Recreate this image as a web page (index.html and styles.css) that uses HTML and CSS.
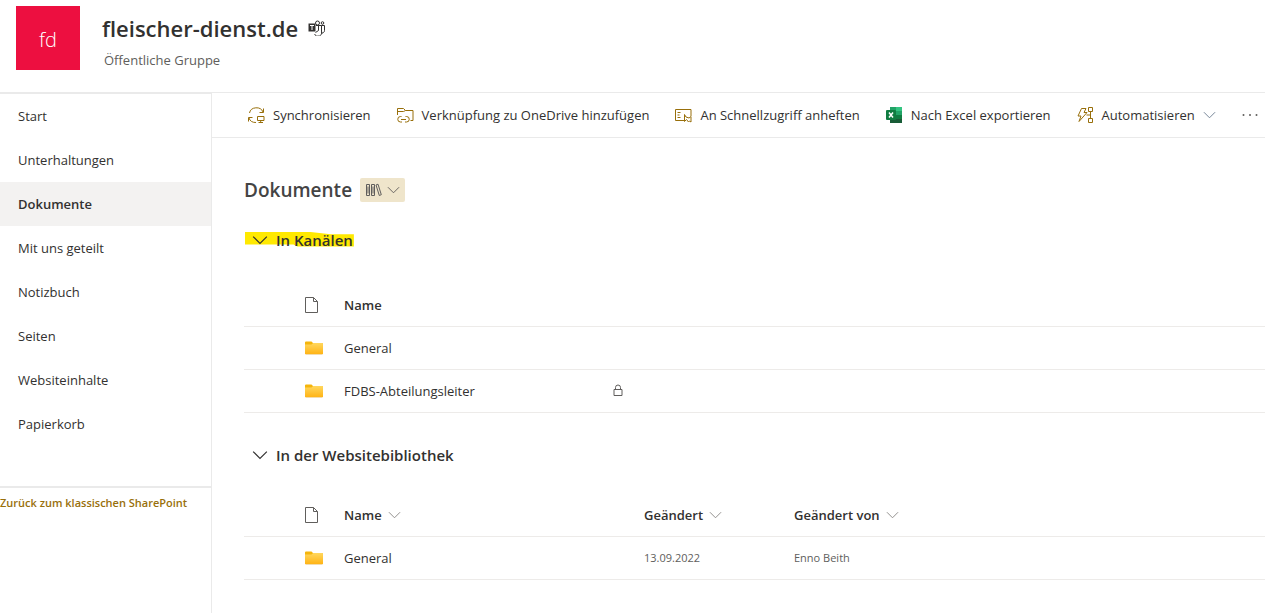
FILE: index.html
```html
<!DOCTYPE html>
<html lang="de">
<head>
<meta charset="utf-8">
<meta name="viewport" content="width=device-width, initial-scale=1">
<title>fleischer-dienst.de - Dokumente</title>
<link rel="stylesheet" href="styles.css">
</head>
<body>
<svg class="defs" aria-hidden="true">
  <defs>
    <linearGradient id="folder-fill" x1="0" y1="0" x2="0" y2="1">
      <stop offset="0" stop-color="#ffd75e"/>
      <stop offset="1" stop-color="#ffb416"/>
    </linearGradient>
    <symbol id="chevron" viewBox="0 0 14 8"><path d="M1 1l6 6 6-6" fill="none" stroke="currentColor"/></symbol>
    <symbol id="file" viewBox="0 0 14 16"><path d="M.5.5h8l4 4v11H.5zM8.500.5v4h4" fill="none" stroke="currentColor"/></symbol>
    <symbol id="folder" viewBox="0 0 18 14">
      <path d="M0 1.500Q0 .5 1 .5h5.500l1.500 1.500h9q1 0 1 1V13H0z" fill="#f5b50c"/>
      <path d="M0 3.500h6.500L8.200 2H17.500q.5 0 .5.500V12.500q0 .5-.5.500H.5q-.5 0-.5-.500z" fill="url(#folder-fill)"/>
      <path d="M.5 13.500h17" stroke="#f3dcae"/>
    </symbol>
  </defs>
</svg>

<header class="site-header">
  <div class="site-logo" aria-hidden="true">fd</div>
  <div>
    <h1 class="site-title">fleischer-dienst.de
      <svg class="teams" viewBox="0 0 18 16" role="img" aria-label="Teams">
        <g fill="none" stroke="#323130">
          <circle cx="9.500" cy="3" r="2"/><circle cx="14.500" cy="3" r="1.300"/>
          <path d="M8 5.500h5.500v5.500a3.600 3.600 0 0 1-7 3M13.500 5.500h3v5a2.500 2.500 0 0 1-3.500 2.300M10.500 6v4.500l-3 2"/>
        </g>
        <path d="M.5 3.500h7v8h-7z" fill="#323130"/>
        <path d="M2 5.500h4M4 5.500v4.500" stroke="#fff" fill="none"/>
      </svg>
    </h1>
    <p class="site-kind">Öffentliche Gruppe</p>
  </div>
</header>

<div class="layout">
  <aside class="sidebar">
    <nav aria-label="Website">
      <ul class="nav-list">
        <li><a class="nav-link" href="#start">Start</a></li>
        <li><a class="nav-link" href="#unterhaltungen">Unterhaltungen</a></li>
        <li><a class="nav-link nav-link-current" href="#dokumente" aria-current="page">Dokumente</a></li>
        <li><a class="nav-link" href="#geteilt">Mit uns geteilt</a></li>
        <li><a class="nav-link" href="#notizbuch">Notizbuch</a></li>
        <li><a class="nav-link" href="#seiten">Seiten</a></li>
        <li><a class="nav-link" href="#inhalte">Websiteinhalte</a></li>
        <li><a class="nav-link" href="#papierkorb">Papierkorb</a></li>
      </ul>
    </nav>
    <div class="classic"><a class="classic-link" href="#klassisch">Zurück zum klassischen SharePoint</a></div>
  </aside>

  <main class="content">
    <div class="commands">
      <button class="command" type="button">
        <svg class="command-icon" viewBox="0 0 17 16"><path d="M1.500 6A7 6.300 0 0 1 15 5M15.500 1.500v4H11.500M.5 14.500v-4h4M1 11a7 6 0 0 0 7 4.500M9.500 9.500h6.500v4H9.500zM12.700 13.500v2M10.500 15.500h4.500"/></svg>
        Synchronisieren
      </button>
      <button class="command" type="button">
        <svg class="command-icon" viewBox="0 0 17 16"><path d="M.5 8V1.500h6l2 2h7.500v10h-2.500M.5 4.500h6l2-1M4.500 9.500h-1a2.700 2.700 0 0 0 0 5.500h1.500M8.500 9.500h1a2.700 2.700 0 0 1 0 5.500H8M4 12.500h5"/></svg>
        Verknüpfung zu OneDrive hinzufügen
      </button>
      <button class="command" type="button">
        <svg class="command-icon" viewBox="0 0 17 16"><path d="M9 13.500H.5v-11h15.500V9M2.500 5.500h3M2.500 8h2M2.500 10.500h3M9.500 7.500v7l2-2 2 2.500 1-1 1.500 1v-5.500l-2 1.500-3-1z"/></svg>
        An Schnellzugriff anheften
      </button>
      <button class="command" type="button">
        <svg class="excel-icon" viewBox="0 0 17 16">
          <path d="M4 0h6v4H4z" fill="#21a366"/><path d="M10 0h6v4h-6z" fill="#33c481"/>
          <path d="M4 4h6v4H4z" fill="#107c41"/><path d="M10 4h6v4h-6z" fill="#21a366"/>
          <path d="M4 8h6v4H4z" fill="#185c37"/><path d="M10 8h6v4h-6z" fill="#107c41"/>
          <path d="M4 12h12v4H4z" fill="#185c37"/>
          <rect y="3" width="10" height="10" rx="1" fill="#107c41"/>
          <path d="M3 5.500l4 5M7 5.500l-4 5" stroke="#fff" stroke-width="1.500"/>
        </svg>
        Nach Excel exportieren
      </button>
      <button class="command" type="button">
        <svg class="command-icon" viewBox="0 0 17 16"><path d="M4.500 1.500h4.500L7 5.500h3L2 14.500l2-5.500H1zM11.500.5h4v4h-4zM11.500 11.500h4v4h-4zM13.500 4.500v7M13.500 8H9.500"/></svg>
        Automatisieren
        <svg class="chevron chevron-blue"><use href="#chevron"/></svg>
      </button>
      <button class="command more" type="button" aria-label="Weitere">
        <svg class="dots" viewBox="0 0 16 4"><circle cx="1.500" cy="2" r="1"/><circle cx="8" cy="2" r="1"/><circle cx="14.500" cy="2" r="1"/></svg>
      </button>
    </div>

    <div class="library">
      <div class="library-head">
        <h2 class="library-title">Dokumente</h2>
        <button class="view-button" type="button" aria-label="Bibliothek wechseln">
          <svg class="books" viewBox="0 0 16 14"><path d="M.5 1.500h3v11h-3zM5.500 1.500h3v11h-3zM10 2l2-.8 3.300 10.500-2 .8zM2 3.500v7M7 3.500v7"/></svg>
          <svg class="chevron chevron-dark"><use href="#chevron"/></svg>
        </button>
      </div>

      <section class="group">
        <h3 class="group-title">
          <button class="group-toggle" type="button" aria-expanded="true">
            <svg class="marker" viewBox="0 0 108 15" preserveAspectRatio="none" aria-hidden="true"><path d="M0 0h65l20 2.200h23V14.500H52L48 12.500H0z"/></svg>
            <svg class="chevron-large"><use href="#chevron"/></svg>
            <span>In Kanälen</span>
          </button>
        </h3>
        <table class="files">
          <thead>
            <tr><th class="col-icon"><svg class="file" role="img" aria-label="Dateityp"><use href="#file"/></svg></th><th class="col-name">Name</th><th></th></tr>
          </thead>
          <tbody>
            <tr><td class="col-icon"><svg class="folder"><use href="#folder"/></svg></td><td>General</td><td></td></tr>
            <tr>
              <td class="col-icon"><svg class="folder"><use href="#folder"/></svg></td>
              <td><div class="name-cell">FDBS-Abteilungsleiter
                <svg class="lock" viewBox="0 0 10 13" role="img" aria-label="Privat"><path d="M1 5.500h8v6H1zM2.500 5.500V3.500a2.500 2.500 0 0 1 5 0v2"/></svg></div></td>
              <td></td>
            </tr>
          </tbody>
        </table>
      </section>

      <section class="group">
        <h3 class="group-title">
          <button class="group-toggle" type="button" aria-expanded="true">
            <svg class="chevron-large"><use href="#chevron"/></svg>
            <span>In der Websitebibliothek</span>
          </button>
        </h3>
        <table class="files">
          <thead>
            <tr>
              <th class="col-icon"><svg class="file" role="img" aria-label="Dateityp"><use href="#file"/></svg></th>
              <th class="col-name"><button class="sort" type="button">Name <svg class="chevron"><use href="#chevron"/></svg></button></th>
              <th class="col-date"><button class="sort" type="button">Geändert <svg class="chevron"><use href="#chevron"/></svg></button></th>
              <th><button class="sort" type="button">Geändert von <svg class="chevron"><use href="#chevron"/></svg></button></th>
            </tr>
          </thead>
          <tbody>
            <tr><td class="col-icon"><svg class="folder"><use href="#folder"/></svg></td><td>General</td><td class="meta">13.09.2022</td><td class="meta">Enno Beith</td></tr>
          </tbody>
        </table>
      </section>
    </div>
  </main>
</div>
</body>
</html>
```

FILE: styles.css
```css
* { box-sizing: border-box; }

body {
  margin: 0;
  min-height: 100vh;
  display: flex;
  flex-direction: column;
  overflow-x: hidden;
  background: #fff;
  color: #323130;
  font: 13px/20px "Open Sans", "Noto Sans", sans-serif;
}

h1, h2, h3, p, ul { margin: 0; padding: 0; }
button { margin: 0; padding: 0; border: 0; background: none; color: inherit; font: inherit; cursor: pointer; }
a { color: inherit; text-decoration: none; }
svg { display: block; flex: none; }
.defs { position: absolute; width: 0; height: 0; }

.site-header {
  display: flex;
  gap: 22px;
  padding: 6px 16px 22px;
  border-bottom: 1px solid #eaeaea;
}
.site-logo {
  display: grid;
  place-items: center;
  width: 64px;
  height: 64px;
  padding-top: 4px;
  background: #ed0f40;
  color: #fff;
  font-size: 20px;
  font-weight: 300;
}
.site-title {
  display: flex;
  align-items: center;
  gap: 10px;
  padding-top: 6px;
  font-size: 22px;
  font-weight: 600;
  line-height: 32px;
}
.teams { width: 18px; height: 16px; }
.site-kind { padding: 6px 2px 0; color: #605e5c; }

.layout { flex: 1; display: flex; }
.sidebar { flex: none; width: 212px; border-right: 1px solid #eaeaea; }
.nav-list { list-style: none; padding: 0 0 40px; border-top: 1px solid #eaeaea; }
.nav-link { display: block; padding: 12px 18px; }
.nav-link-current { background: #f3f2f1; font-weight: 600; }
.classic { border-top: 2px solid #eaeaea; padding: 4px 0; }
.classic-link { color: #986f0b; font-size: 11px; font-weight: 600; }

.content { flex: 1; min-width: 0; }
.commands {
  display: flex;
  align-items: center;
  gap: 26px;
  height: 45px;
  padding: 0 9px 0 36px;
  border-bottom: 1px solid #eaeaea;
  white-space: nowrap;
}
.command { display: flex; align-items: center; gap: 8px; }
.command-icon, .excel-icon { width: 17px; height: 16px; }
.command-icon { fill: none; stroke: #986f0b; }
.more { margin-left: auto; }
.dots { width: 16px; height: 4px; fill: #605e5c; }
.chevron { width: 13px; height: 8px; color: #8a8886; }
.chevron-blue { color: #6c7c90; }
.chevron-dark { color: #605e5c; }

.library { padding: 36px 0 0 32px; }
.library-head { display: flex; align-items: center; gap: 8px; height: 32px; }
.library-title { font-size: 19px; font-weight: 600; line-height: 28px; color: #444; }
.view-button {
  display: flex;
  align-items: center;
  gap: 5px;
  height: 24px;
  padding: 0 5px 0 6px;
  border-radius: 2px;
  background: #efe5cb;
}
.books { width: 16px; height: 14px; fill: none; stroke: #605e5c; }

.group { padding-top: 22px; }
.group + .group { padding-top: 30px; }
.group-title { font-size: 15px; font-weight: 600; }
.group-toggle { position: relative; display: flex; align-items: center; gap: 8px; height: 24px; padding-left: 8px; }
.group-toggle > span { position: relative; }
.chevron-large { position: relative; width: 16px; height: 10px; }
.marker { position: absolute; left: 1px; top: 4px; width: 100%; height: 15px; fill: #ffe900; }

.files { width: 100%; margin-top: 32px; border-collapse: collapse; table-layout: fixed; }
.group + .group .files { margin-top: 28px; }
.files tr { height: 43px; border-bottom: 1px solid #edebe9; }
.files thead tr { height: 42px; }
.files th, .files td { padding: 0; text-align: left; }
.files th { font-weight: 600; }
.files .col-icon { width: 100px; padding-left: 61px; }
.col-name { width: 300px; }
.col-date { width: 150px; }
.files .meta { color: #605e5c; font-size: 11px; }
.file { width: 14px; height: 16px; color: #605e5c; }
.folder { width: 18px; height: 14px; }
.name-cell { display: flex; justify-content: space-between; align-items: center; padding-right: 21px; }
.lock { width: 10px; height: 13px; fill: none; stroke: #605e5c; }
.sort { display: flex; align-items: center; gap: 6px; font-weight: 600; }
```
